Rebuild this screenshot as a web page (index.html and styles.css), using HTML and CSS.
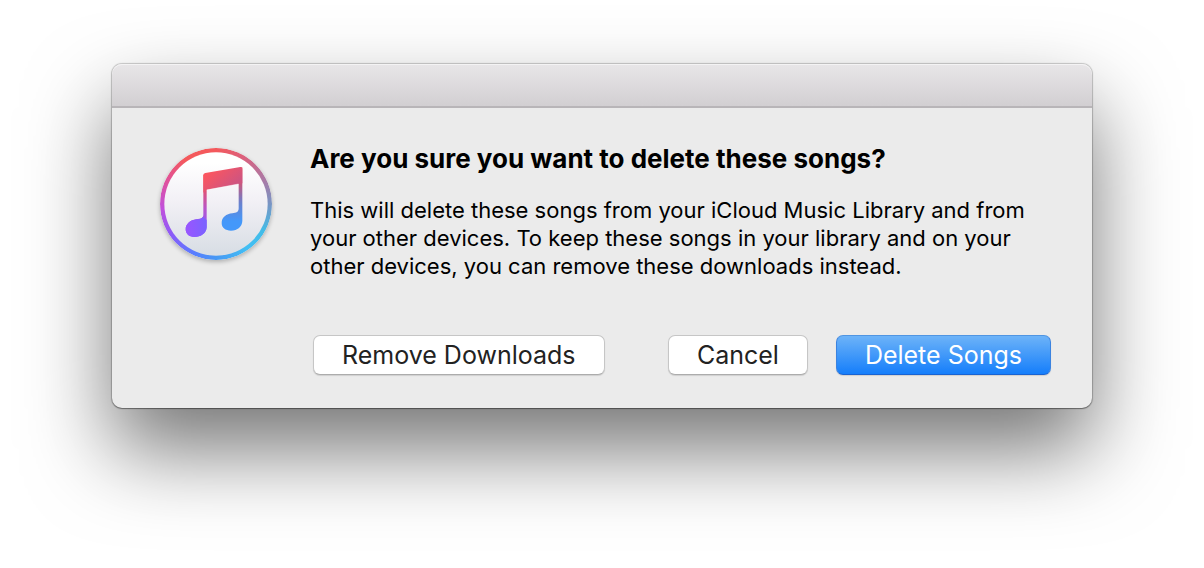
FILE: index.html
```
<!DOCTYPE html>
<html lang="en">
<head>
    <meta charset="UTF-8">
    <meta name="viewport" content="width=device-width, initial-scale=1.0">
    <title>Delete Songs</title>
    <link rel="stylesheet" href="styles.css">
</head>
<body>
    <div class="dialog" role="alertdialog" aria-labelledby="dialogTitle" aria-describedby="dialogText">
        <div class="titlebar"></div>
        <div class="content">
            <svg class="icon" viewBox="30 30 336 336" aria-hidden="true">
                <defs>
                    <linearGradient id="face" x1="0" y1="0" x2="0" y2="1">
                        <stop offset="0.1" stop-color="#ffffff"/>
                        <stop offset="0.45" stop-color="#f3f1f6"/>
                        <stop offset="1" stop-color="#d7dde4"/>
                    </linearGradient>
                    <linearGradient id="noteWarm" gradientUnits="userSpaceOnUse" x1="0" y1="90" x2="0" y2="296">
                        <stop offset="0.1" stop-color="#fb5660"/>
                        <stop offset="0.35" stop-color="#dc527c"/>
                        <stop offset="0.6" stop-color="#b654cc"/>
                        <stop offset="0.9" stop-color="#8a5cff"/>
                    </linearGradient>
                    <linearGradient id="noteCool" gradientUnits="userSpaceOnUse" x1="0" y1="90" x2="0" y2="278">
                        <stop offset="0" stop-color="#ee5866"/>
                        <stop offset="0.25" stop-color="#c8587e"/>
                        <stop offset="0.55" stop-color="#6b80cc"/>
                        <stop offset="0.85" stop-color="#4498fa"/>
                    </linearGradient>
                    <linearGradient id="beam" gradientUnits="userSpaceOnUse" x1="180" y1="100" x2="230" y2="160">
                        <stop offset="0" stop-color="#fb5660"/>
                        <stop offset="1" stop-color="#cf5480"/>
                    </linearGradient>
                    <linearGradient id="purpleHead" gradientUnits="userSpaceOnUse" x1="107" y1="0" x2="168" y2="0">
                        <stop offset="0" stop-color="#9a55ff"/>
                        <stop offset="1" stop-color="#7b62ff"/>
                    </linearGradient>
                </defs>
                <foreignObject class="ring-box" x="30" y="30" width="336" height="336">
                    <div class="ring"></div>
                </foreignObject>
                <circle cx="198" cy="198" r="155" fill="url(#face)"/>
                <g class="note">
                    <path fill="url(#noteWarm)" d="M160 110 L170 107 V268 C169 286 153 297 133 297 C117 297 107 287 107 274 C107 258 121 246 139 244 C153 242 160 242 160 229Z"/>
                    <path fill="url(#purpleHead)" d="M170 246 V268 C169 286 153 297 133 297 C117 297 107 287 107 274 C107 258 121 246 139 244 C148 243 156 242 159 236Z"/>
                    <path fill="url(#noteCool)" d="M266 90 L277 88 V249 C276 266 263 278 243 278 C226 278 215 269 215 255 C215 238 229 228 247 226 C259 224 266 223 266 211Z"/>
                    <path fill="url(#beam)" d="M160 112 Q160 106 166 105 L271 87 Q277 86 277 92 V136 L170 155 L160 164Z"/>
                    <path class="cut" d="M170 156 L265 138"/>
                </g>
            </svg>
            <div class="message">
                <h1 id="dialogTitle" class="title">Are you sure you want to delete these songs?</h1>
                <p id="dialogText" class="text">This will delete these songs from your iCloud Music Library and from your other devices. To keep these songs in your library and on your other devices, you can remove these downloads instead.</p>
                <div class="buttons">
                    <button type="button" class="btn btn-remove">Remove Downloads</button>
                    <button type="button" class="btn">Cancel</button>
                    <button type="button" class="btn btn-primary">Delete Songs</button>
                </div>
            </div>
        </div>
    </div>
</body>
</html>
```
FILE: styles.css
```
*{box-sizing:border-box;}
body{
    margin:0;
    min-height:100vh;
    padding:64px 112px;
    background:#fff;
    font-family:Inter, "Liberation Sans", sans-serif;
    color:#000;
}
.dialog{
    background:#ebebeb;
    border-radius:10px;
    box-shadow:0 0 1px 1px rgba(0,0,0,.2), 0 1px 1px rgba(0,0,0,.3), 0 42px 84px rgba(0,0,0,.54);
}
.titlebar{
    height:44px;
    border-bottom:2px solid #b8b5b8;
    border-radius:10px 10px 0 0;
    background:linear-gradient(#e8e6e8, #d2cfd2);
    box-shadow:inset 0 1px 0 #f4f3f4;
}
.content{
    display:flex;
    align-items:flex-start;
    gap:38px;
    padding:35px 41px 33px 48px;
}
.icon{
    flex:none;
    width:112px;
    height:112px;
    margin-top:5px;
    border-radius:50%;
    box-shadow:0 2px 4px rgba(0,0,0,.25);
}
.ring{
    width:336px;
    height:336px;
    border-radius:50%;
    background:conic-gradient(#f4595c, #dc607c 30deg, #a87ba8 65deg, #7895c4 90deg, #42bce8 120deg, #42bff4 145deg, #4698f4 180deg, #5a7cff 205deg, #8a5cf8 235deg, #c04fdc 265deg, #e0529c 295deg, #f4595c 325deg, #f4595c);
}
.note .cut{
    fill:none;
    stroke:#fff;
    stroke-width:2;
    opacity:.6;
}
.message{
    flex:1;
    min-width:0;
}
.title{
    margin:0;
    font-size:26px;
    line-height:32px;
    font-weight:700;
}
.text{
    margin:21px 0 55px;
    font-size:22px;
    line-height:28px;
}
.buttons{
    display:flex;
    gap:28px;
    padding-left:3px;
}
.btn{
    height:40px;
    padding:0 28px;
    border:1px solid #c6c6c6;
    border-bottom-color:#acacac;
    border-radius:7px;
    background:#fff;
    box-shadow:0 1px 1px rgba(0,0,0,.12);
    font-family:inherit;
    font-size:25px;
    line-height:38px;
    color:#222;
    white-space:nowrap;
}
.btn-remove{margin-right:auto;}
.btn-primary{
    border-color:#5095e2 #3b83e0 #1963d2;
    background:linear-gradient(#6db3f8, #157efb);
    color:#fff;
}
```
